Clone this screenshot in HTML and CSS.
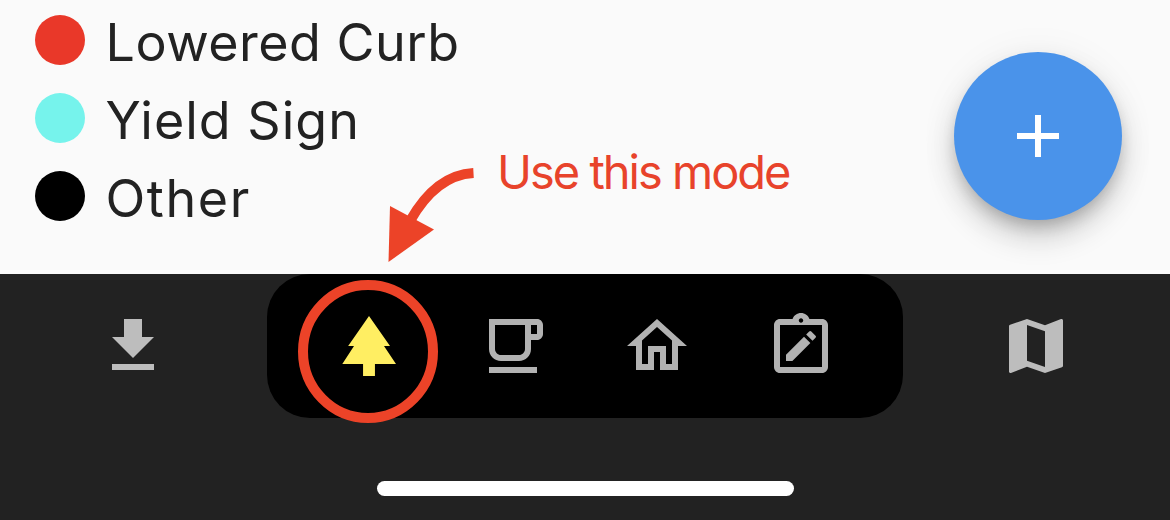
FILE: index.html
```html
<!DOCTYPE html>
<html lang="en">
<head>
<meta charset="utf-8">
<title>Map legend</title>
<link rel="stylesheet" href="styles.css">
</head>
<body>
<div class="screen">
  <main class="content">
    <ul class="legend">
      <li class="legend-item"><span class="dot dot-red"></span><span class="label label-curb">Lowered Curb</span></li>
      <li class="legend-item"><span class="dot dot-cyan"></span><span class="label label-yield">Yield Sign</span></li>
      <li class="legend-item"><span class="dot dot-black"></span><span class="label label-other">Other</span></li>
    </ul>
    <button class="fab" aria-label="Add">
      <svg viewBox="0 0 24 24"><path d="M19 13h-6v6h-2v-6H5v-2h6V5h2v6h6v2z"/></svg>
    </button>
  </main>
  <nav class="bottom-bar">
    <div class="tabs">
      <svg class="icon" viewBox="0 0 24 24"><path d="M19 9h-4V3H9v6H5l7 7 7-7zM5 18v2h14v-2H5z"/></svg>
      <div class="pill">
        <svg class="icon active" viewBox="0 0 24 24"><path d="M17 12h2L12 2 5.05 12H7l-3.9 6h6.92v4h3.96v-4H21z"/></svg>
        <svg class="icon" viewBox="0 0 24 24"><path d="M16 5v8c0 1.1-.9 2-2 2H8c-1.1 0-2-.9-2-2V5h10m4-2H4v10c0 2.21 1.79 4 4 4h6c2.21 0 4-1.79 4-4v-3h2c1.11 0 2-.89 2-2V5c0-1.11-.89-2-2-2zm-2 5V5h2v3h-2zM4 19h16v2H4z"/></svg>
        <svg class="icon" viewBox="0 0 24 24"><path d="M12 5.69l5 4.5V18h-2v-6H9v6H7v-7.81l5-4.5M12 3L2 12h3v8h6v-6h2v6h6v-8h3L12 3z"/></svg>
        <svg class="icon" viewBox="0 0 24 24"><path fill-rule="evenodd" d="M19 3h-4.180C14.4 1.84 13.3 1 12 1s-2.4.84-2.82 2H5c-1.1 0-2 .9-2 2v14c0 1.1.9 2 2 2h14c1.1 0 2-.9 2-2V5c0-1.1-.9-2-2-2zm-7-.25c.41 0 .75.34.75.75s-.34.75-.75.75-.75-.34-.75-.75.34-.75.75-.75zM19 19H5V5h14v14z"/><path d="M7 14.88V17h2.12l6-6L13 8.88zM13.72 8.17l1-1a.5.5 0 0 1 .71 0l1.41 1.41a.5.5 0 0 1 0 .71l-1 1z"/></svg>
      </div>
      <svg class="icon" viewBox="0 0 24 24"><path d="M20.5 3l-.16.03L15 5.1 9 3 3.36 4.9c-.21.07-.36.25-.36.48V20.5c0 .28.22.5.5.5l.16-.03L9 18.9l6 2.1 5.64-1.9c.21-.07.36-.25.36-.48V3.5c0-.28-.22-.5-.5-.5zM15 19l-6-2.11V5l6 2.11V19z"/></svg>
    </div>
    <div class="home-indicator"></div>
  </nav>
  <div class="callout">Use this mode</div>
  <svg class="markup" viewBox="0 0 1170 520">
    <path class="stroke" d="M473.5 173Q436 175 410 221"/>
    <path class="head" d="M390 206L434 229.500L388.500 262Z"/>
    <ellipse class="stroke" cx="368" cy="351.500" rx="65" ry="66.500"/>
  </svg>
</div>
</body>
</html>
```
FILE: styles.css
```css
* { box-sizing: border-box; }
body { margin: 0; font-family: Inter, "Liberation Sans", sans-serif; }

.screen {
  position: relative;
  width: 1170px;
  height: 520px;
  overflow: hidden;
  background: #fafafa;
}

.content {
  display: flex;
  justify-content: space-between;
  height: 274px;
  padding: 1px 48px 0 35px;
}

.legend { margin: 0; padding: 0; list-style: none; }
.legend-item { display: flex; align-items: center; height: 78px; gap: 20.5px; }
.dot { width: 50px; height: 50px; border-radius: 50%; }
.dot-red { background: #e93829; }
.dot-cyan { background: #76f3ec; }
.dot-black { background: #000; }
.label {
  padding-top: 6px;
  color: #222;
  font-size: 52px;
  line-height: 72px;
  white-space: nowrap;
}
.label-curb { letter-spacing: .5px; }
.label-yield { letter-spacing: 1px; }
.label-other { letter-spacing: 1.6px; }

.fab {
  display: grid;
  place-items: center;
  width: 168px;
  height: 168px;
  margin: 51px 0 0;
  padding: 0;
  border: 0;
  border-radius: 50%;
  background: #4a93ea;
  box-shadow: 0 9px 15px -3px rgba(0, 0, 0, .2), 0 18px 30px rgba(0, 0, 0, .16), 0 3px 40px rgba(0, 0, 0, .06);
}
.fab svg { width: 72px; height: 72px; fill: #fff; }

.bottom-bar { height: 246px; background: #222; }
.tabs {
  display: flex;
  align-items: center;
  justify-content: space-between;
  height: 144px;
  padding: 0 98px 0 97px;
}
.pill {
  display: flex;
  align-items: center;
  gap: 72px;
  width: 636px;
  height: 144px;
  padding-left: 66px;
  border-radius: 43px;
  background: #000;
}
.icon { flex: none; width: 72px; height: 72px; fill: #bdbdbd; }
.pill .icon { fill: #b2b2b2; }
.pill .icon.active { fill: #ffee62; }

.home-indicator {
  width: 417px;
  height: 15px;
  margin: 63px 0 0 377px;
  border-radius: 8px;
  background: #fff;
}

.callout {
  position: absolute;
  left: 497px;
  top: 142px;
  color: #e8432b;
  font-size: 47px;
  line-height: 60px;
  letter-spacing: -2px;
  white-space: nowrap;
}
.markup { position: absolute; inset: 0; width: 1170px; height: 520px; }
.markup .stroke { fill: none; stroke: #ec4328; stroke-width: 10; }
.markup .head { fill: #ec4328; }
```
